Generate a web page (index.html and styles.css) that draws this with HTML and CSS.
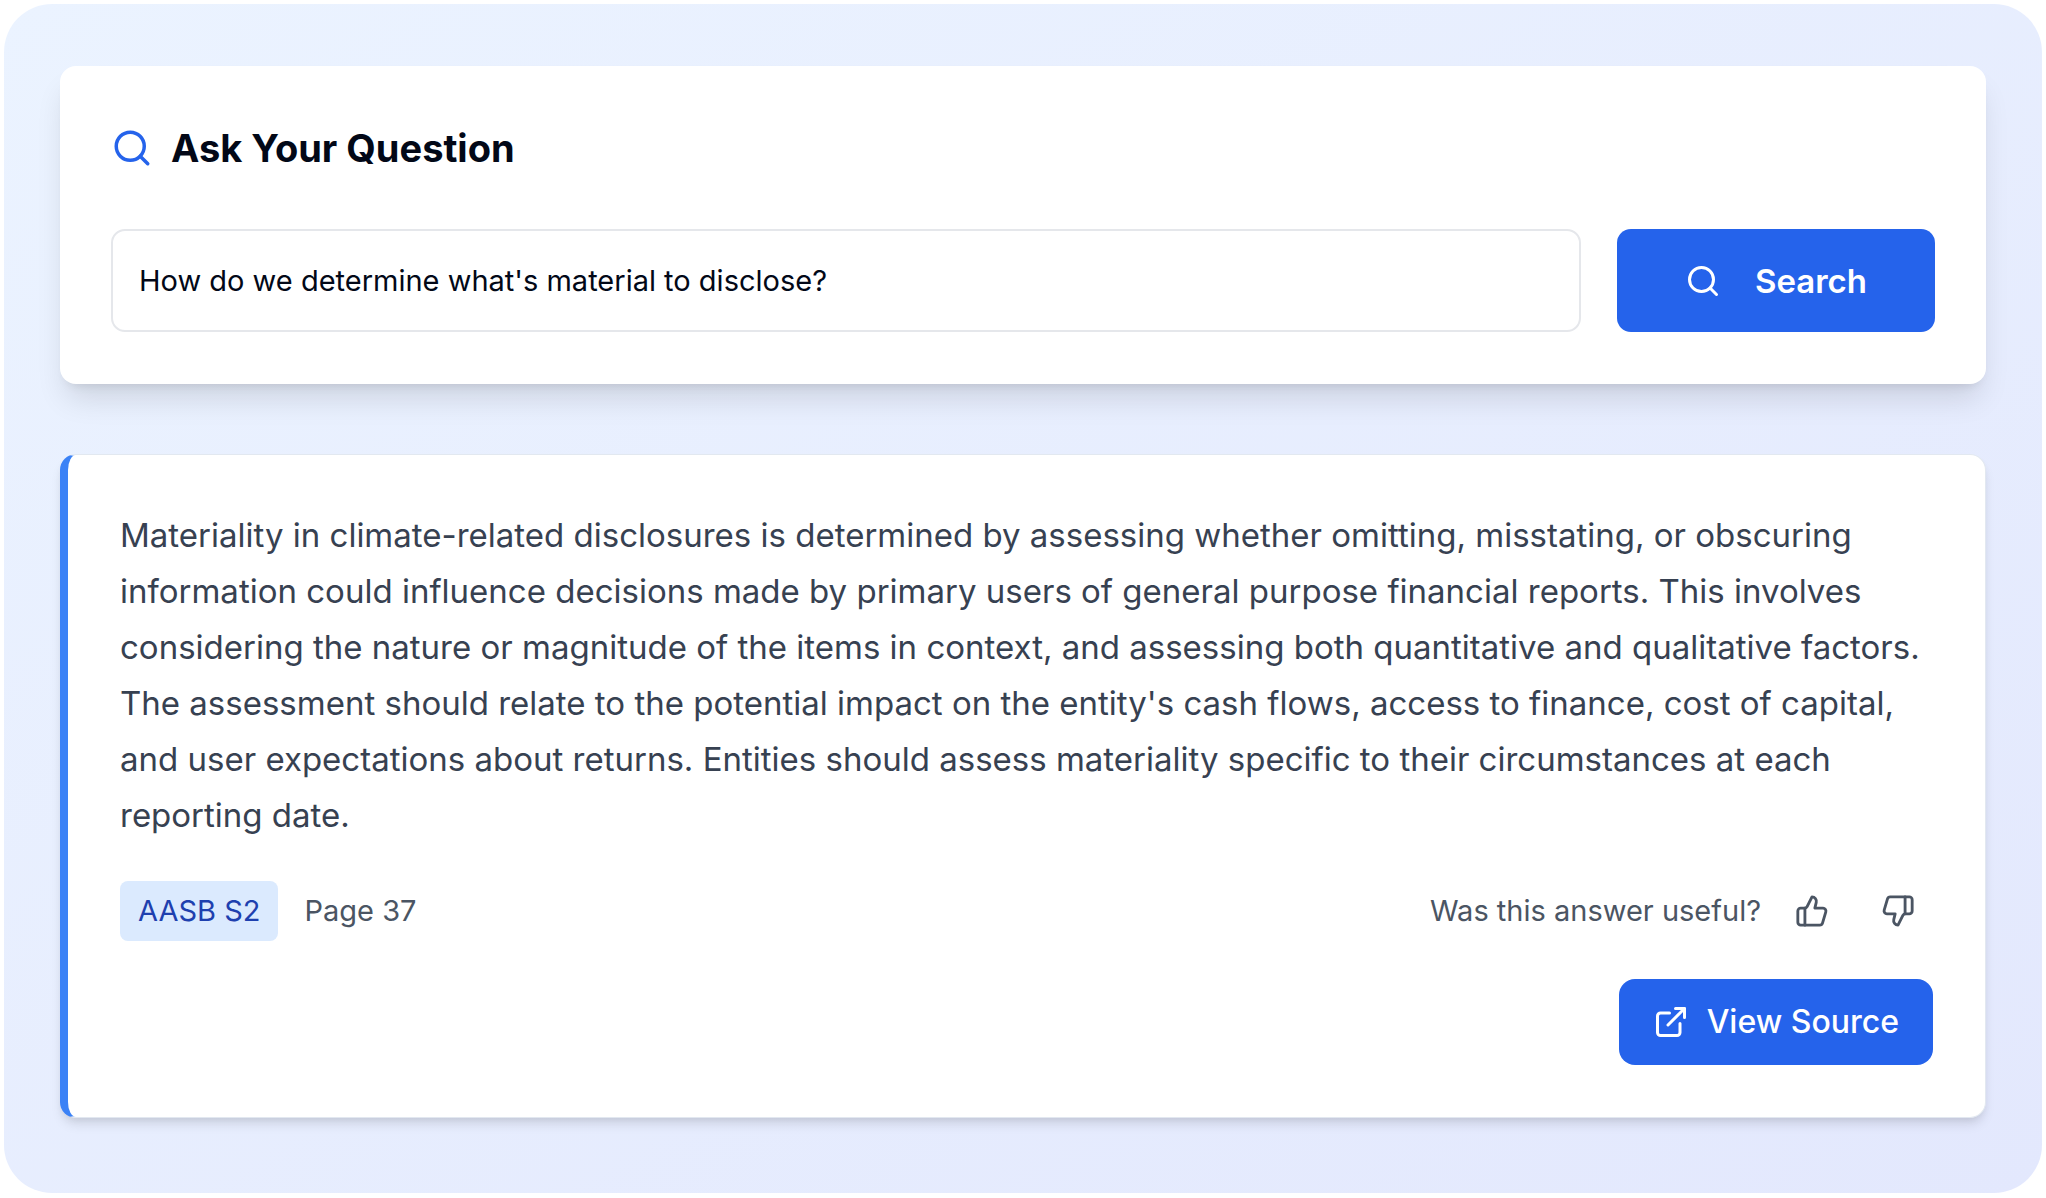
FILE: index.html
```
<!DOCTYPE html>
<html lang="en">
<head>
  <meta charset="UTF-8" />
  <meta name="viewport" content="width=device-width, initial-scale=1.0" />
  <title>Ask Your Question</title>
  <link rel="stylesheet" href="styles.css">
</head>
<body>
  <main class="panel">
    <section class="card search-card">
      <h1 class="title">
        <svg class="icon icon-title" viewBox="0 0 24 24" aria-hidden="true"><circle cx="11" cy="11" r="8"/><path d="m21 21-4.3-4.3"/></svg>
        <label for="question">Ask Your Question</label>
      </h1>
      <form class="search-form" onsubmit="return false">
        <input type="text" id="question" class="question" value="How do we determine what's material to disclose?">
        <button type="submit" class="btn btn-search">
          <svg class="icon icon-search" viewBox="0 0 24 24" aria-hidden="true"><circle cx="11" cy="11" r="8"/><path d="m21 21-4.3-4.3"/></svg>
          Search
        </button>
      </form>
    </section>

    <section class="card answer-card">
      <p class="answer">Materiality in climate-related disclosures is determined by assessing whether omitting, misstating, or obscuring information could influence decisions made by primary users of general purpose financial reports. This involves considering the nature or magnitude of the items in context, and assessing both quantitative and qualitative factors. The assessment should relate to the potential impact on the entity's cash flows, access to finance, cost of capital, and user expectations about returns. Entities should assess materiality specific to their circumstances at each reporting date.</p>
      <div class="meta">
        <span class="badge">AASB S2</span>
        <span class="page">Page 37</span>
        <div class="feedback">
          <span>Was this answer useful?</span>
          <button type="button" class="vote" aria-label="Useful">
            <svg class="icon icon-vote" viewBox="0 0 24 24" aria-hidden="true"><path d="M7 10v12"/><path d="M15 5.88 14 10h5.83a2 2 0 0 1 1.92 2.56l-2.33 8A2 2 0 0 1 17.5 22H4a2 2 0 0 1-2-2v-8a2 2 0 0 1 2-2h2.76a2 2 0 0 0 1.79-1.11L12 2a3.13 3.13 0 0 1 3 3.88Z"/></svg>
          </button>
          <button type="button" class="vote" aria-label="Not useful">
            <svg class="icon icon-vote" viewBox="0 0 24 24" aria-hidden="true"><path d="M17 14V2"/><path d="M9 18.12 10 14H4.17a2 2 0 0 1-1.92-2.56l2.33-8A2 2 0 0 1 6.5 2H20a2 2 0 0 1 2 2v8a2 2 0 0 1-2 2h-2.76a2 2 0 0 0-1.79 1.11L12 22a3.13 3.13 0 0 1-3-3.88Z"/></svg>
          </button>
        </div>
      </div>
      <div class="actions">
        <a href="#" class="btn btn-source">
          <svg class="icon icon-source" viewBox="0 0 24 24" aria-hidden="true"><path d="M15 3h6v6"/><path d="M10 14 21 3"/><path d="M18 13v6a2 2 0 0 1-2 2H5a2 2 0 0 1-2-2V8a2 2 0 0 1 2-2h6"/></svg>
          View Source
        </a>
      </div>
    </section>
  </main>
</body>
</html>
```

FILE: styles.css
```
* { box-sizing: border-box; }
body { margin: 4px; background: #fff; font-family: Inter, "Liberation Sans", sans-serif; color: #020817; }
h1, p { margin: 0; }

.panel { display: flex; flex-direction: column; gap: 70px; padding: 62px 56px 75px; border-radius: 48px; background: linear-gradient(to bottom right, #ebf3ff, #e3e8fd); }

.card { background: #fff; border-radius: 16px; }
.search-card { padding: 52px 51px; box-shadow: 0 20px 30px -6px rgba(0,0,0,0.12), 0 8px 12px -8px rgba(0,0,0,0.12); }
.answer-card { padding: 52px; border: 1px solid #e2e8f0; border-left: 8px solid #3b82f6; box-shadow: 0 8px 12px -2px rgba(0,0,0,0.1), 0 4px 8px -4px rgba(0,0,0,0.1); }

.icon { flex: none; fill: none; stroke: currentColor; stroke-width: 2; stroke-linecap: round; stroke-linejoin: round; }

.title { display: flex; align-items: center; gap: 18px; margin-bottom: 51px; font-size: 38px; line-height: 60px; font-weight: 700; }
.icon-title { width: 42px; height: 42px; color: #2563eb; }

.search-form { display: flex; gap: 36px; }
.question { flex: 1; min-width: 0; height: 103px; padding: 0 26px; border: 2px solid #e5e7eb; border-radius: 14px; background: #fff; font-family: inherit; font-size: 29px; color: inherit; }

.btn { display: flex; align-items: center; justify-content: center; border: none; background: #2563eb; color: #fff; font-family: inherit; text-decoration: none; cursor: pointer; }
.btn:hover { background: #1d4ed8; }
.btn-search { gap: 34px; padding: 0 68px; border-radius: 14px; font-size: 33px; font-weight: 600; }
.icon-search { width: 36px; height: 36px; }

.answer { font-size: 33px; line-height: 56px; color: #374151; }

.meta { display: flex; align-items: center; gap: 26px; margin: 38px 0; font-size: 29px; line-height: 60px; color: #4b5563; }
.badge { padding: 0 18px; border-radius: 8px; background: #dbeafe; color: #1e40af; }
.feedback { display: flex; align-items: center; gap: 16px; margin-left: auto; }
.vote { display: flex; padding: 12px 18px; border: none; border-radius: 12px; background: none; color: inherit; cursor: pointer; }
.icon-vote { width: 34px; height: 34px; }

.actions { display: flex; justify-content: flex-end; }
.btn-source { gap: 18px; padding: 0 34px; border-radius: 16px; font-size: 32px; line-height: 86px; font-weight: 500; }
.icon-source { width: 36px; height: 36px; }
```
